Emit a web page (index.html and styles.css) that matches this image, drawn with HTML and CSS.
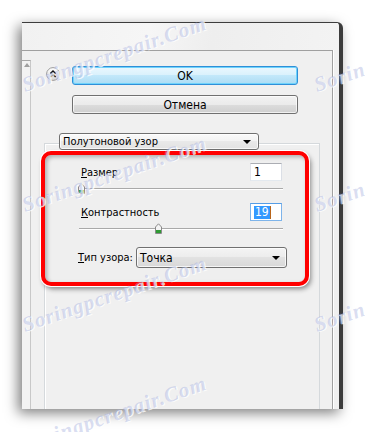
FILE: index.html
```html
<!DOCTYPE html>
<html lang="ru">
<head>
  <meta charset="UTF-8">
  <title>Полутоновой узор</title>
  <link rel="stylesheet" href="styles.css">
</head>
<body>
  <div class="window">
    <div class="titlebar"></div>
    <div class="panel">
      <div class="side-strip"><span class="strip-arrow"></span></div>
      <div class="main">
        <!-- Buttons -->
        <div class="actions">
          <span class="collapse-icon">
            <svg width="14" height="14" viewBox="0 0 14 14">
              <defs>
                <linearGradient id="knob" x1="0" y1="0" x2="0" y2="1">
                  <stop offset="0" stop-color="#ffffff"/>
                  <stop offset="1" stop-color="#d6d6d6"/>
                </linearGradient>
              </defs>
              <circle cx="7" cy="7" r="6.4" fill="url(#knob)" stroke="#9b9b9b"/>
              <path d="M4.4 6.6 L7 4 L9.6 6.6 M4.4 10 L7 7.4 L9.6 10" fill="none" stroke="#111" stroke-width="1.4"/>
            </svg>
          </span>
          <div class="buttons">
            <button class="btn btn-default">OK</button>
            <button class="btn">Отмена</button>
          </div>
        </div>
        <!-- Filter group -->
        <div class="group">
          <div class="combo combo-filter">
            <span>Полутоновой узор</span>
            <span class="combo-arrow"></span>
          </div>
          <div class="highlight">
            <div class="field">
              <label><u>Р</u>азмер</label>
              <span class="num-input">1</span>
            </div>
            <div class="slider">
              <span class="thumb" style="left: -1px">
                <svg width="7" height="11" viewBox="0 0 7 11"><path d="M0.5 10.5 V4 L3.5 0.8 L6.5 4 V10.5 Z" fill="#f4f4f4" stroke="#8a8a8a"/><rect x="1" y="7" width="5" height="3" fill="#2f9a34"/></svg>
              </span>
            </div>
            <div class="field field-second">
              <label><u>К</u>онтрастность</label>
              <span class="num-input focused"><span class="selection">19</span></span>
            </div>
            <div class="slider">
              <span class="thumb" style="left: 76px">
                <svg width="7" height="11" viewBox="0 0 7 11"><path d="M0.5 10.5 V4 L3.5 0.8 L6.5 4 V10.5 Z" fill="#f4f4f4" stroke="#8a8a8a"/><rect x="1" y="7" width="5" height="3" fill="#2f9a34"/></svg>
              </span>
            </div>
            <div class="type-row">
              <label><u>Т</u>ип узора:</label>
              <div class="combo combo-type">
                <span>Точка</span>
                <span class="combo-arrow"></span>
              </div>
            </div>
          </div>
        </div>
      </div>
    </div>
  </div>

  <!-- Watermark -->
  <div class="watermarks">
    <span class="wm wm-1">Soringpcrepair.Com</span>
    <span class="wm wm-2">Soringpcrepair.Com</span>
    <span class="wm wm-3">Soringpcrepair.Com</span>
    <span class="wm wm-4">Soringpcrepair.Com</span>
    <span class="wm wm-5">Soringpcrepair.Com</span>
    <span class="wm wm-6">Soringpcrepair.Com</span>
    <span class="wm wm-7">Soringpcrepair.Com</span>
  </div>
</body>
</html>
```

FILE: styles.css
```css
/* Base styles */
*, ::before, ::after {
  box-sizing: border-box;
  margin: 0;
  padding: 0;
}
body {
  position: relative;
  width: 365px;
  height: 432px;
  overflow: hidden;
  background-color: #ffffff;
  color: #000000;
  font-family: "DejaVu Sans Condensed", "DejaVu Sans", sans-serif;
  font-size: 11px;
}
u {
  text-decoration: underline;
  text-underline-offset: 1px;
}

/* Dialog window */
.window {
  display: flex;
  flex-direction: column;
  width: 321px;
  height: 387px;
  margin: 22px 0 0 22px;
  overflow: hidden;
  background-color: #f0f0f0;
  border-top: 1px solid #3c3c3c;
  border-right: 4px solid #3c3c3c;
  border-top-right-radius: 6px;
  box-shadow: -4px 4px 13px rgba(0,0,0,0.5);
}
.titlebar {
  height: 27px;
  background: linear-gradient(100deg, #f1f1f1 0%, #f6f6f6 40%, #eeeeee 60%, #f3f3f3 100%);
}
.panel {
  flex: 1;
  display: flex;
  min-height: 0;
  margin-right: 6px;
  border-top: 1px solid #a0a0a0;
  border-right: 1px solid #a0a0a0;
  box-shadow: 1px 0 0 #ffffff;
}
.side-strip {
  position: relative;
  width: 9px;
  margin-top: 9px;
  background-color: #f3f3f3;
  border-top: 1px solid #a8a8a8;
  border-right: 1px solid #c8c8c8;
}
.strip-arrow {
  position: absolute;
  top: 2px;
  left: 2px;
  border-left: 3px solid transparent;
  border-right: 3px solid transparent;
  border-bottom: 4px solid #a0a0a0;
}
.main {
  flex: 1;
  display: flex;
  flex-direction: column;
}

/* Buttons */
.actions {
  display: flex;
  align-items: flex-start;
  padding: 15px 0 0 15px;
}
.collapse-icon {
  width: 14px;
  height: 14px;
  margin: 1px 12px 0 0;
}
.collapse-icon svg {
  display: block;
}
.buttons {
  display: flex;
  flex-direction: column;
  gap: 10px;
  width: 226px;
}
.btn {
  height: 19px;
  font-family: inherit;
  font-size: 12px;
  color: #000000;
  border: 1px solid #707070;
  border-radius: 3px;
  background: linear-gradient(#f2f2f2 0%, #ebebeb 50%, #dddddd 50%, #cfcfcf 100%);
  box-shadow: inset 0 0 0 1px rgba(255,255,255,0.7);
}
.btn-default {
  border-color: #2f8fd8;
  background: linear-gradient(#eaf7fe 0%, #d9f1fc 50%, #c2e8fa 50%, #acdcf4 100%);
  box-shadow: inset 0 0 0 1px #6fd3fb;
}

/* Group box */
.group {
  flex: 1;
  margin: 29px 12px 0 13px;
  border: 1px solid #d5d9dc;
  border-bottom: none;
  box-shadow: inset 1px 1px 0 #ffffff;
}
.combo {
  display: flex;
  align-items: center;
  justify-content: space-between;
  padding: 0 7px 0 3px;
  border: 1px solid #707070;
  border-radius: 3px;
  background: linear-gradient(#f4f4f4 0%, #ececec 50%, #e2e2e2 50%, #d8d8d8 100%);
  box-shadow: inset 0 0 0 1px rgba(255,255,255,0.75);
}
.combo-filter {
  width: 200px;
  height: 17px;
  margin: -11px 0 0 14px;
  background: linear-gradient(#fafafa 0%, #f2f2f2 50%, #e9e9e9 50%, #e2e2e2 100%);
}
.combo-arrow {
  border-left: 4px solid transparent;
  border-right: 4px solid transparent;
  border-top: 4px solid #000000;
}

/* Highlighted block */
.highlight {
  width: 268px;
  height: 135px;
  margin: 1px 0 0 -4px;
  padding-top: 8px;
  border: 4px solid #ff0000;
  border-radius: 10px;
  background-color: #efefef;
  box-shadow: 0 0 0 1px #ffffff, 2px 3px 5px rgba(0,0,0,0.45), inset 2px 2px 4px rgba(0,0,0,0.28);
}
.field {
  display: flex;
  align-items: center;
  justify-content: space-between;
  width: 201px;
  height: 18px;
  margin-left: 36px;
}
.field-second {
  margin-top: 8px;
}
.num-input {
  display: flex;
  align-items: center;
  width: 32px;
  height: 18px;
  padding-left: 3px;
  font-size: 12px;
  background-color: #ffffff;
  border: 1px solid;
  border-color: #abadb3 #dbdfe6 #e3e9ef #e2e3ea;
}
.num-input.focused {
  border-color: #569de5 #7eb4ea #7eb4ea #7eb4ea;
}
.selection {
  padding: 0 1px;
  line-height: 13px;
  color: #ffffff;
  background-color: #3399ff;
  border-right: 1px solid #b8651a;
}
.slider {
  position: relative;
  width: 204px;
  height: 14px;
  margin-left: 34px;
}
.slider::before {
  content: "";
  position: absolute;
  top: 7px;
  left: 0;
  right: 0;
  height: 2px;
  border-top: 1px solid #a9a9a9;
  border-bottom: 1px solid #ffffff;
}
.thumb {
  position: absolute;
  top: 2px;
  width: 7px;
  height: 11px;
}
.thumb svg {
  display: block;
}
.type-row {
  display: flex;
  align-items: center;
  justify-content: space-between;
  width: 209px;
  margin: 12px 0 0 33px;
}
.combo-type {
  width: 151px;
  height: 21px;
  font-size: 12px;
  padding-right: 6px;
}

/* Watermark */
.watermarks {
  position: absolute;
  top: 0;
  left: 0;
  width: 365px;
  height: 432px;
  pointer-events: none;
}
.wm {
  position: absolute;
  font-family: "Liberation Serif", serif;
  font-style: italic;
  font-weight: bold;
  font-size: 21px;
  line-height: 22px;
  letter-spacing: 1px;
  white-space: nowrap;
  color: rgba(165,176,222,0.42);
  text-shadow: 1px 1px 0 rgba(255,255,255,0.8);
  transform: rotate(-19deg);
  transform-origin: 0 18px;
}
.wm-1 { left: 25px; top: 74px; }
.wm-2 { left: 25px; top: 194px; }
.wm-3 { left: 25px; top: 314px; }
.wm-4 { left: 25px; top: 434px; }
.wm-5 { left: 317px; top: 74px; }
.wm-6 { left: 317px; top: 194px; }
.wm-7 { left: 317px; top: 314px; }
```
